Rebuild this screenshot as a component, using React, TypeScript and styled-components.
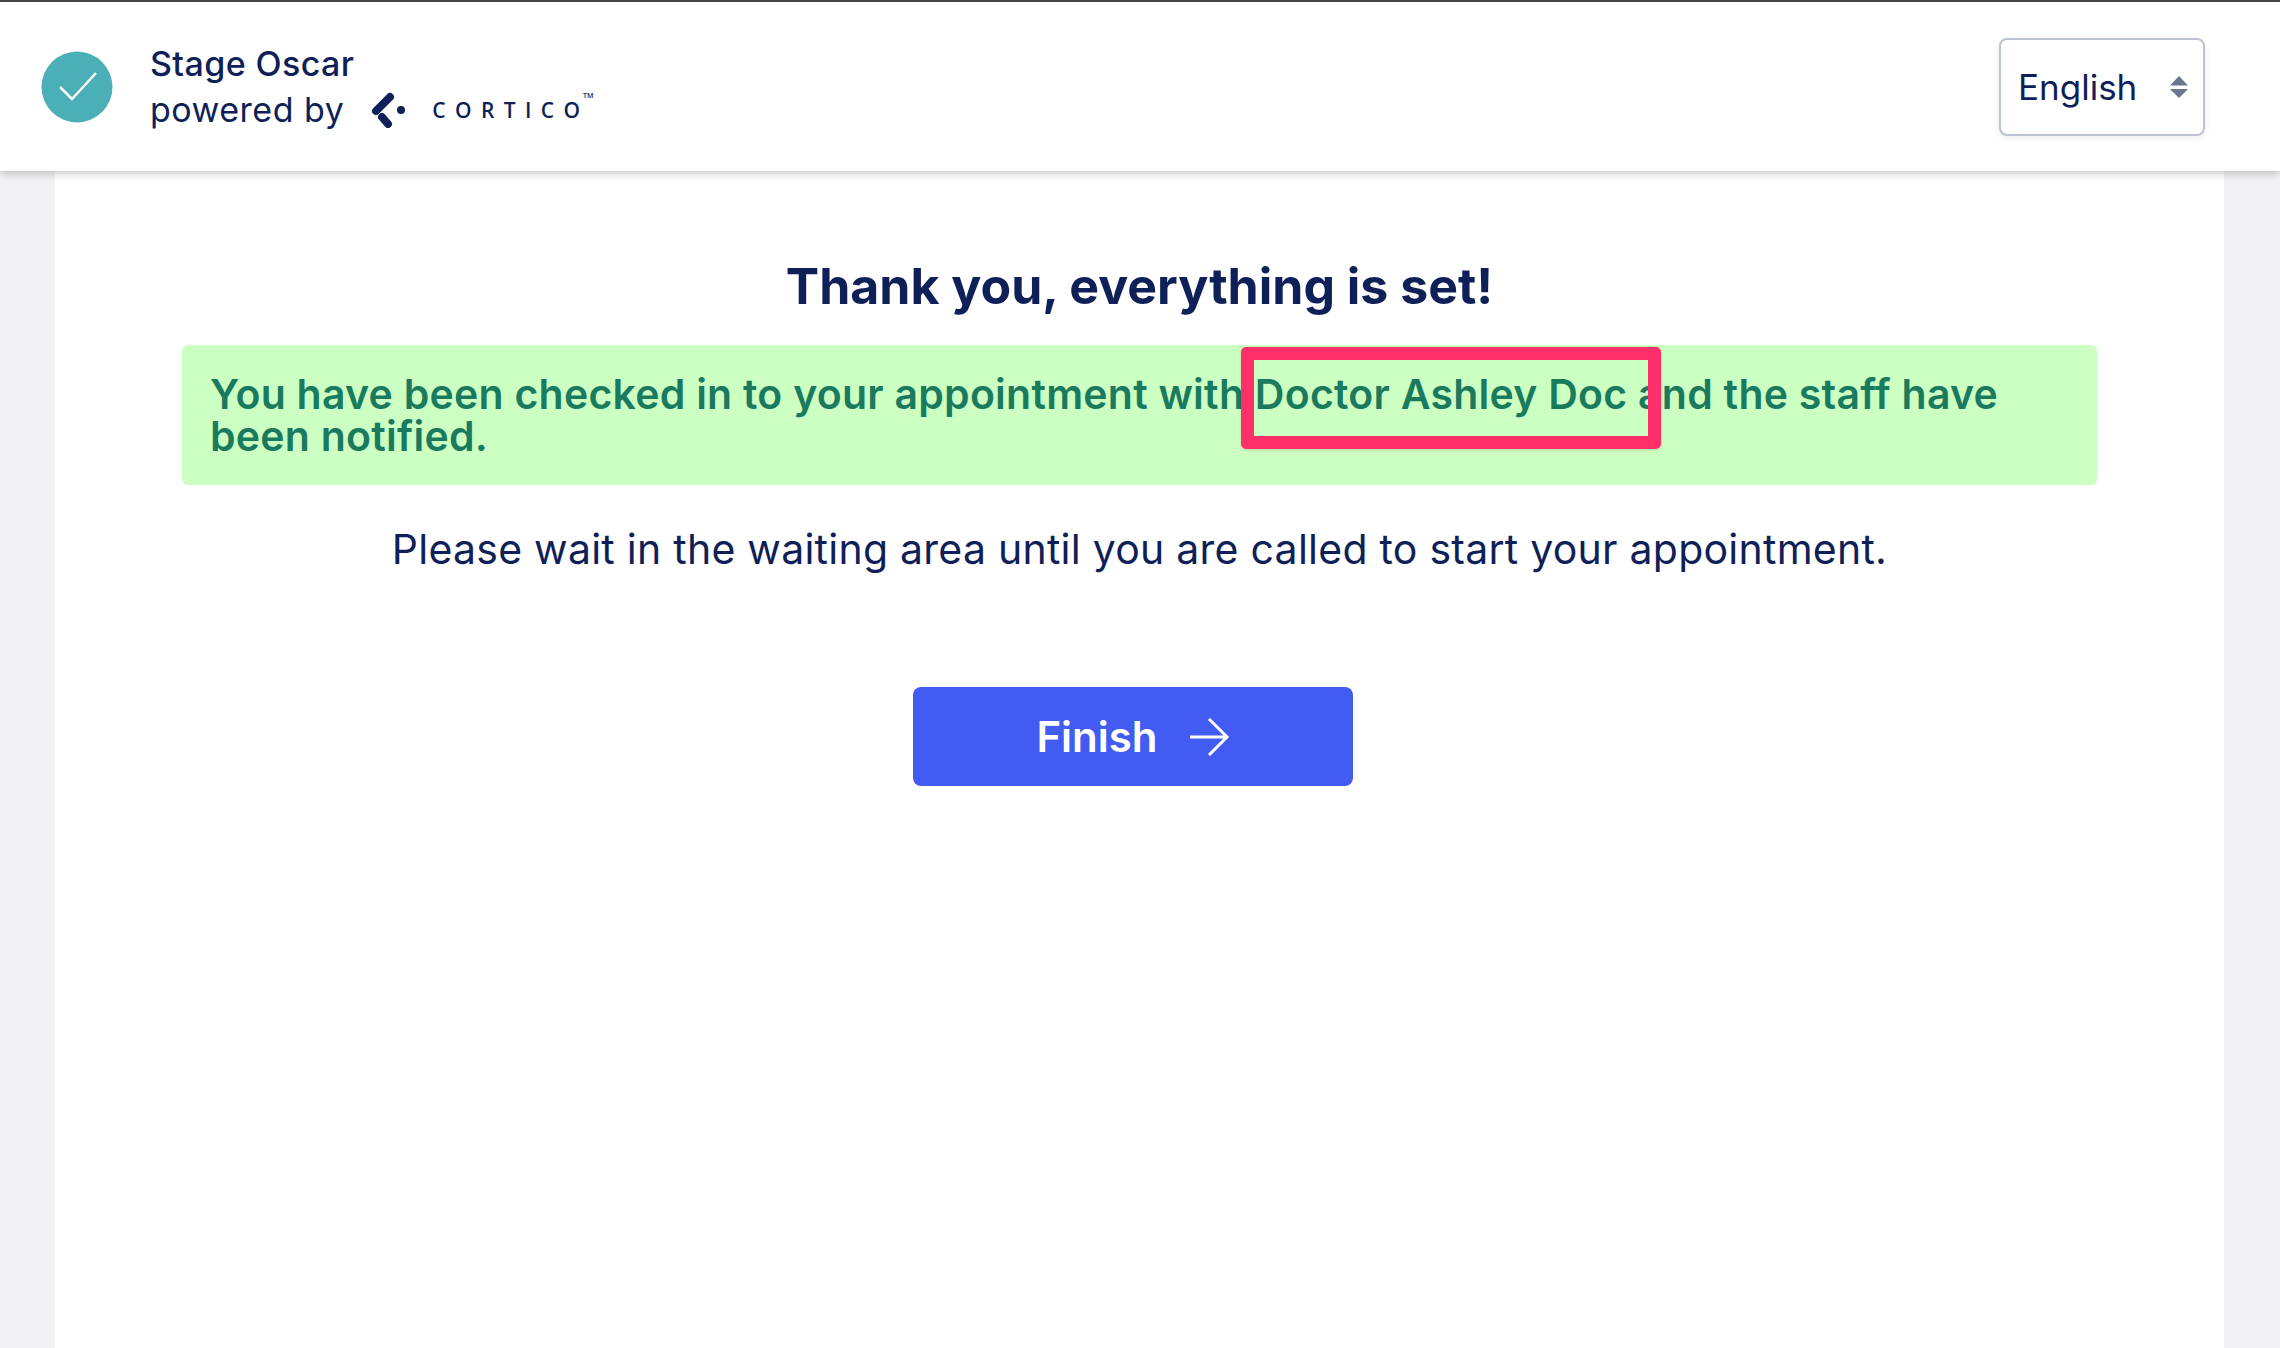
import React from "react";
import styled, { createGlobalStyle } from "styled-components";

const GlobalStyle = createGlobalStyle`
	html, body {
		margin: 0;
		padding: 0;
		background: #f2f2f5;
		font-family: Inter, "Liberation Sans", sans-serif;
		color: #0f1f57;
	}
`

const Page = styled.div`
	display: flex;
	flex-direction: column;
	width: 2280px;
	height: 1348px;
	overflow: hidden;
`

const Header = styled.header`
	box-sizing: border-box;
	height: 171px;
	flex: none;
	display: flex;
	align-items: center;
	justify-content: space-between;
	padding: 0 75px 0 41px;
	background: #ffffff;
	border-top: 2px solid #444444;
	box-shadow: 0 3px 8px rgba(0, 0, 0, 0.2);
	position: relative;
	z-index: 1;
`

const Brand = styled.div`
	display: flex;
	align-items: center;
	gap: 37px;
`

const BrandText = styled.div`
	display: flex;
	flex-direction: column;
	font-size: 34px;
	line-height: 46px;
`

const BrandName = styled.div`
	font-weight: 500;
	letter-spacing: 0.4px;
`

const PoweredRow = styled.div`
	display: flex;
	align-items: center;
	font-weight: 400;
	letter-spacing: 0.5px;
`

const CorticoWord = styled.span`
	position: relative;
	margin-left: 26px;
	font-family: "Open Sans", sans-serif;
	font-size: 21px;
	line-height: 28px;
	font-weight: 600;
	letter-spacing: 9.4px;
`

const TradeMark = styled.sup`
	position: absolute;
	top: -4px;
	right: -4px;
	font-size: 7px;
	line-height: 8px;
	letter-spacing: 0;
`

const LangSelect = styled.div`
	box-sizing: border-box;
	width: 206px;
	height: 98px;
	display: flex;
	align-items: center;
	justify-content: space-between;
	padding: 0 15px 0 17px;
	background: #ffffff;
	border: 2px solid #bec3d3;
	border-radius: 8px;
	box-shadow: 0 2px 6px rgba(15, 31, 87, 0.08);
	font-size: 35px;
`

const Content = styled.main`
	box-sizing: border-box;
	flex: 1;
	width: 2169px;
	margin-left: 55px;
	padding: 85px 127px 0;
	display: flex;
	flex-direction: column;
	align-items: center;
	background: #ffffff;
`

const Title = styled.h1`
	margin: 0 0 29px;
	font-size: 50px;
	line-height: 60px;
	font-weight: 700;
	letter-spacing: 0;
`

const Banner = styled.div`
	position: relative;
	box-sizing: border-box;
	align-self: stretch;
	height: 140px;
	padding: 28px 28px;
	background: #ccffc2;
	border-radius: 6px;
	color: #1a7a5e;
	font-size: 41px;
	line-height: 42px;
	font-weight: 600;
	letter-spacing: 0.25px;
`

const Highlight = styled.div`
	position: absolute;
	box-sizing: border-box;
	left: 1059px;
	top: 2px;
	width: 420px;
	height: 102px;
	border: 13px solid #ff2f6a;
	border-radius: 5px;
	box-shadow: 0 1px 3px rgba(0, 0, 0, 0.15);
`

const WaitNote = styled.p`
	margin: 39px 0 0;
	font-size: 41px;
	line-height: 50px;
	font-weight: 400;
	letter-spacing: 0.25px;
`

const FinishButton = styled.button`
	box-sizing: border-box;
	width: 440px;
	height: 99px;
	margin: 113px 0 0 -13px;
	display: flex;
	align-items: center;
	justify-content: center;
	gap: 32px;
	border: 0;
	border-radius: 8px;
	background: #425cf3;
	color: #ffffff;
	font-family: Inter, sans-serif;
	font-size: 42px;
	font-weight: 600;
`

const LogoMark = () => (
	<svg width="36" height="36" viewBox="0 0 36 36" style={{ marginLeft: 26 }}>
		<path d="M20 5 L6 19" stroke="#0f1f57" strokeWidth="8" strokeLinecap="round" />
		<path d="M12 25 L18 32" stroke="#0f1f57" strokeWidth="8" strokeLinecap="round" />
		<circle cx="31" cy="18" r="4" fill="#0f1f57" />
	</svg>
)

export default function App() {
	return (
		<Page>
			<GlobalStyle />
			<Header>
				<Brand>
					<svg width="72" height="72" viewBox="0 0 72 72">
						<circle cx="36" cy="36" r="35.5" fill="#4aafb6" />
						<path d="M19 36 L31 48 L55 22" fill="none" stroke="#ffffff" strokeWidth="2.5" />
					</svg>
					<BrandText>
						<BrandName>Stage Oscar</BrandName>
						<PoweredRow>
							powered by
							<LogoMark />
							<CorticoWord>
								CORTICO
								<TradeMark>TM</TradeMark>
							</CorticoWord>
						</PoweredRow>
					</BrandText>
				</Brand>
				<LangSelect>
					English
					<svg width="18" height="22" viewBox="0 0 18 22">
						<path d="M9 0 L18 9.5 H0 Z M0 13 H18 L9 22 Z" fill="#6b7690" />
					</svg>
				</LangSelect>
			</Header>
			<Content>
				<Title>Thank you, everything is set!</Title>
				<Banner>
					You have been checked in to your appointment with Doctor Ashley Doc and the staff have been notified.
					<Highlight />
				</Banner>
				<WaitNote>Please wait in the waiting area until you are called to start your appointment.</WaitNote>
				<FinishButton>
					Finish
					<svg width="40" height="38" viewBox="0 0 40 38">
						<path d="M0 19 H37 M19 1 L37 19 L19 37" fill="none" stroke="#ffffff" strokeWidth="3" />
					</svg>
				</FinishButton>
			</Content>
		</Page>
	)
}
